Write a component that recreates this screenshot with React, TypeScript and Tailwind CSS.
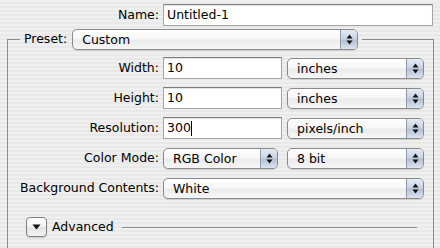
import React from "react";

function Stepper() {
  return (
    <span className="w-[17px] shrink-0 border-l border-[#8e99ad] bg-[linear-gradient(to_bottom,#e4eaf3_0%,#c9d4e4_45%,#b3c1d6_55%,#dbe4f0_100%)] flex items-center justify-center">
      <svg width="7" height="11" viewBox="0 0 7 11">
        <polygon points="3.5,0.5 6.5,4.5 0.5,4.5" fill="#111" />
        <polygon points="0.5,6.5 6.5,6.5 3.5,10.5" fill="#111" />
      </svg>
    </span>
  );
}

function Popup({ label, className }: { label: string; className: string }) {
  return (
    <div
      className={
        "flex items-stretch h-[21px] rounded-[5px] border border-[#8a8a8a] overflow-hidden shadow-[0_1px_1px_rgba(0,0,0,0.12)] bg-[linear-gradient(to_bottom,#ffffff_0%,#f7f7f7_45%,#ebebeb_55%,#f7f7f7_100%)] " +
        className
      }
    >
      <span className="flex-1 pl-[9px] leading-[19px] whitespace-nowrap">{label}</span>
      <Stepper />
    </div>
  );
}

function Field({ value, className, caret }: { value: string; className: string; caret?: boolean }) {
  return (
    <div
      className={
        "h-[22px] bg-white border border-[#a5a5a5] border-t-[#7d7d7d] shadow-[inset_0_1px_1px_rgba(0,0,0,0.12)] pl-[3px] flex items-center " +
        className
      }
    >
      <span className="leading-[20px]">{value}</span>
      {caret && <span className="inline-block w-[1px] h-[15px] bg-black" />}
    </div>
  );
}

function Row({ label, children }: { label: string; children: React.ReactNode }) {
  return (
    <div className="flex items-center h-[30px]">
      <div className="w-[151px] text-right whitespace-nowrap">{label}</div>
      <div className="flex items-center pl-[4px]">{children}</div>
    </div>
  );
}

export default function App() {
  return (
    <div
      className="w-[440px] h-[248px] overflow-hidden text-black text-[12.5px] bg-[repeating-linear-gradient(to_bottom,#efefef_0px,#efefef_2px,#e8e8e8_2px,#e8e8e8_4px)]"
      style={{ fontFamily: '"DejaVu Sans", "Liberation Sans", sans-serif' }}
    >
      <div className="flex items-center pt-[4px]">
        <div className="w-[159px] text-right">Name:</div>
        <Field value="Untitled-1" className="ml-[4px] w-[270px] h-[21px]" />
      </div>

      <fieldset className="ml-[7px] mt-[3px] w-[427px] h-[260px] border border-[#8c8c8c] p-0 m-0">
        <legend className="ml-[12px] px-[4px] flex items-center">
          <span className="mr-[5px]">Preset:</span>
          <Popup label="Custom" className="w-[286px]" />
        </legend>
        <div className="pt-[3px]">
          <Row label="Width:">
            <Field value="10" className="w-[119px]" />
            <Popup label="inches" className="ml-[5px] w-[137px]" />
          </Row>
          <Row label="Height:">
            <Field value="10" className="w-[119px]" />
            <Popup label="inches" className="ml-[5px] w-[137px]" />
          </Row>
          <Row label="Resolution:">
            <Field value="300" caret className="w-[119px]" />
            <Popup label="pixels/inch" className="ml-[5px] w-[137px]" />
          </Row>
          <Row label="Color Mode:">
            <Popup label="RGB Color" className="w-[115px]" />
            <Popup label="8 bit" className="ml-[9px] w-[137px]" />
          </Row>
          <Row label="Background Contents:">
            <Popup label="White" className="w-[261px]" />
          </Row>
          <div className="flex items-center h-[30px] mt-[9px] pl-[18px]">
            <div className="w-[21px] h-[20px] rounded-[4px] border border-[#7f7f7f] bg-[linear-gradient(to_bottom,#ffffff_0%,#f2f2f2_50%,#e2e2e2_51%,#f4f4f4_100%)] shadow-[0_1px_1px_rgba(0,0,0,0.15)] flex items-center justify-center">
              <svg width="9" height="6" viewBox="0 0 9 6">
                <polygon points="0.5,0.5 8.5,0.5 4.5,5.5" fill="#111" />
              </svg>
            </div>
            <span className="ml-[5px]">Advanced</span>
            <div className="ml-[8px] w-[295px] h-[1px] bg-[#8f8f8f]" />
          </div>
        </div>
      </fieldset>
    </div>
  );
}
